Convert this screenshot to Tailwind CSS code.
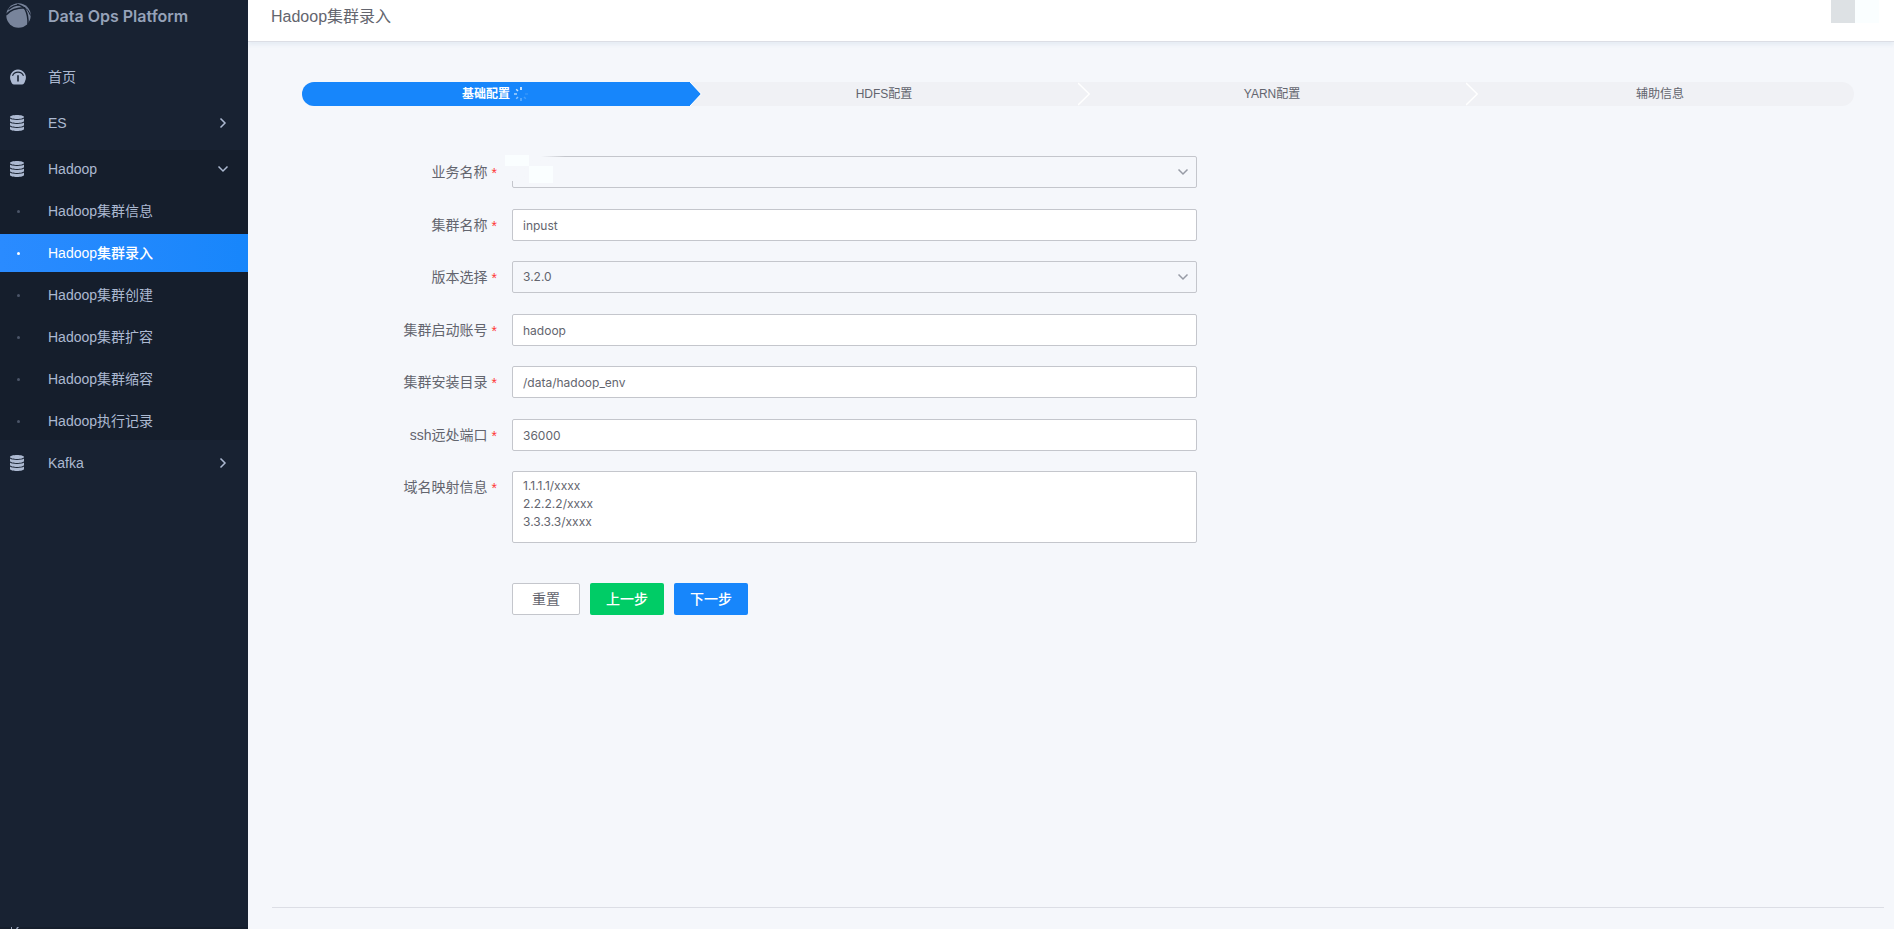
<!DOCTYPE html>
<html lang="zh-CN">
<head>
<meta charset="utf-8">
<title>Data Ops Platform</title>
<script src="https://cdn.jsdelivr.net/npm/@tailwindcss/browser@4"></script>
</head>
<body class="flex h-screen overflow-hidden bg-[#f5f7fb] font-['Liberation_Sans','Noto_Sans_CJK_SC',sans-serif] text-sm text-[#63656e]">
<svg class="hidden">
  <symbol id="db" viewBox="0 0 14 16"><path d="M7 0c3.900 0 7 .9 7 2s-3.100 2-7 2-7-.9-7-2 3.100-2 7-2zM0 3.600C1.200 4.600 4 5 7 5s5.800-.4 7-1.400V6c0 1.100-3.100 2-7 2S0 7.100 0 6zM0 7.600C1.200 8.600 4 9 7 9s5.800-.4 7-1.400V10c0 1.100-3.100 2-7 2s-7-.9-7-2zM0 11.600C1.200 12.600 4 13 7 13s5.800-.4 7-1.400V14c0 1.100-3.100 2-7 2s-7-.9-7-2z"/></symbol>
  <symbol id="right" viewBox="0 0 12 12"><path d="M3.500 1.500 8 6l-4.500 4.500" fill="none" stroke="currentColor" stroke-width="1.500"/></symbol>
  <symbol id="down" viewBox="0 0 12 12"><path d="M1.500 3.500 6 8l4.500-4.500" fill="none" stroke="currentColor" stroke-width="1.500"/></symbol>
</svg>

<aside class="flex w-[248px] shrink-0 flex-col overflow-hidden bg-[#182232] text-[#acb9d1]">
  <div class="flex h-[54px] shrink-0 items-start gap-[17px] pl-[6px] pt-[3px]">
    <svg class="size-[25px] text-[#78849b]" viewBox="0 0 25 25" aria-hidden="true">
      <circle cx="12.500" cy="12.500" r="12.200" fill="currentColor"/>
      <g fill="none" stroke="#182232"><path d="M0 12C3.500 7.500 9 5 19 4.800" stroke-width="1.500"/><path d="M11 1.500c4 .8 7 2.500 8.500 5.500 2 4 2.700 8.500 2.500 14" stroke-width="1.500"/><path d="M2.500 6.500C6 3.500 9 2 13 1.800" stroke-width="1.200"/><path d="M18.500 4.500c2.500 1.500 4.500 4 6 8" stroke-width="1"/></g>
    </svg>
    <span class="font-['Inter',sans-serif] text-base leading-[27px] font-semibold text-[#96a2b9]">Data Ops Platform</span>
  </div>
  <nav>
    <a href="#" class="my-1 flex h-[38px] items-center pl-[10px]">
      <svg class="size-4" viewBox="0 0 16 16" fill="currentColor"><path d="M8 .5a7.900 7.900 0 0 1 7.200 11.200C14.600 14 13.600 15.500 12 15.500H4c-1.600 0-2.600-1.500-3.200-3.800A7.900 7.900 0 0 1 8 .5z"/><path d="M2.500 6.800a6 6 0 0 1 11 0" fill="none" stroke="#182232" stroke-width="1.200"/><path d="M7.200 6.200h1.600v6.300H7.200z" fill="#182232"/></svg>
      <span class="ml-[22px]">首页</span>
    </a>
    <a href="#" class="mt-2 mb-1 flex h-[38px] items-center pl-[10px] pr-[19px]">
      <svg class="h-4 w-[14px]" fill="currentColor"><use href="#db"/></svg>
      <span class="ml-6 grow">ES</span>
      <svg class="size-3"><use href="#right"/></svg>
    </a>
    <div class="mt-2 flex flex-col gap-1 bg-[#151e2c]">
      <a href="#" class="flex h-[38px] items-center pl-[10px] pr-[19px]">
        <svg class="h-4 w-[14px]" fill="currentColor"><use href="#db"/></svg>
        <span class="ml-6 grow">Hadoop</span>
        <svg class="size-3"><use href="#down"/></svg>
      </a>
      <a href="#" class="flex h-[38px] items-center pl-[17px]"><i class="size-[3px] rounded-full bg-[#4b5568]"></i><span class="ml-7">Hadoop集群信息</span></a>
      <a href="#" class="flex h-[38px] items-center bg-linear-to-r from-[#2a8bff] to-[#1786fb] pl-[17px] font-medium text-white"><i class="size-[3px] rounded-full bg-white"></i><span class="ml-7">Hadoop集群录入</span></a>
      <a href="#" class="flex h-[38px] items-center pl-[17px]"><i class="size-[3px] rounded-full bg-[#4b5568]"></i><span class="ml-7">Hadoop集群创建</span></a>
      <a href="#" class="flex h-[38px] items-center pl-[17px]"><i class="size-[3px] rounded-full bg-[#4b5568]"></i><span class="ml-7">Hadoop集群扩容</span></a>
      <a href="#" class="flex h-[38px] items-center pl-[17px]"><i class="size-[3px] rounded-full bg-[#4b5568]"></i><span class="ml-7">Hadoop集群缩容</span></a>
      <a href="#" class="flex h-[38px] items-center pl-[17px]"><i class="size-[3px] rounded-full bg-[#4b5568]"></i><span class="ml-7">Hadoop执行记录</span></a>
    </div>
    <a href="#" class="my-1 flex h-[38px] items-center pl-[10px] pr-[19px]">
      <svg class="h-4 w-[14px]" fill="currentColor"><use href="#db"/></svg>
      <span class="ml-6 grow">Kafka</span>
      <svg class="size-3"><use href="#right"/></svg>
    </a>
  </nav>
  <div class="mt-auto h-[2px] bg-[#151e2c] pl-[10px]">
    <svg class="h-[2px] w-3" viewBox="0 0 12 2"><path d="M1 0h1v2H1zM7 0h2L7.500 2H6z" fill="#96a2b9"/></svg>
  </div>
</aside>

<div class="flex min-w-0 grow flex-col">
  <header class="z-10 flex h-[42px] shrink-0 items-start justify-between border-b border-[#dcdee5] bg-white pl-[23px] pr-[15px] shadow-[0_3px_4px_0_rgba(64,112,160,0.08)]">
    <h1 class="text-base leading-[34px]">Hadoop集群录入</h1>
    <div class="flex"><i class="h-[23px] w-6 bg-[#dde1e4]"></i><i class="h-[23px] w-6 bg-[#fafeff]"></i></div>
  </header>

  <main class="flex grow flex-col">
    <ol class="mt-10 mr-10 ml-[54px] grid h-6 grid-cols-4 overflow-hidden rounded-full bg-[#f0f1f5] text-xs">
      <li class="relative flex items-center justify-center gap-1 bg-[#1786fb] pr-[2px] font-bold text-white">
        基础配置
        <svg class="size-[14px]" viewBox="0 0 14 14" stroke="#fff" stroke-width="1.500"><path d="M7 0v3"/><path d="M2.200 2.200l1.800 1.800" opacity=".75"/><path d="M0 7h3" opacity=".65"/><path d="M2.200 11.800l1.800-1.800" opacity=".5"/><path d="M7 11v3" opacity=".35"/><path d="M10 10l1.800 1.800" opacity=".2"/><path d="M11 7h3" opacity=".12"/></svg>
        <svg class="absolute top-0 left-full z-10 h-6 w-3" viewBox="0 0 12 24"><path d="M-1 0H0l11 12L0 24h-1z" fill="#1786fb"/><path d="M0 0l11.300 12L0 24" fill="none" stroke="#fff"/></svg>
      </li>
      <li class="relative flex items-center justify-center">HDFS配置
        <svg class="absolute top-0 left-full h-6 w-3" viewBox="0 0 12 24"><path d="M0 1l11.300 11L0 23" fill="none" stroke="#fff" stroke-width="1.500"/></svg>
      </li>
      <li class="relative flex items-center justify-center">YARN配置
        <svg class="absolute top-0 left-full h-6 w-3" viewBox="0 0 12 24"><path d="M0 1l11.300 11L0 23" fill="none" stroke="#fff" stroke-width="1.500"/></svg>
      </li>
      <li class="flex items-center justify-center">辅助信息</li>
    </ol>

    <form class="mt-[50px] ml-[54px] w-[895px] max-w-full">
      <div class="flex flex-col gap-5 [&>*:nth-child(even)]:mt-px">
        <div class="flex">
          <label for="biz" class="flex h-8 w-[195px] shrink-0 justify-end gap-1 leading-8">业务名称<span class="pt-px text-[#ff3737]">*</span></label>
          <div class="relative ml-[15px] grow">
            <select id="biz" class="block h-8 w-full appearance-none rounded-[2px] border border-[#c4c6cc] bg-[#f5f7fb] px-[10px] font-['Inter',sans-serif] text-xs"><option></option></select>
            <svg class="absolute top-[10px] right-2 size-3 text-[#979ba5]"><use href="#down"/></svg>
            <div class="absolute -top-px -left-[7px] flex h-[26px] w-[60px] bg-linear-to-r from-[#f5f7fb] from-60% to-transparent"><i class="h-[11px] w-6 bg-[#fafeff]"></i><i class="mt-[11px] h-[17px] w-6 bg-[#fafeff]"></i></div>
          </div>
        </div>
        <div class="flex">
          <label for="name" class="flex h-8 w-[195px] shrink-0 justify-end gap-1 leading-8">集群名称<span class="pt-px text-[#ff3737]">*</span></label>
          <input id="name" value="inpust" class="ml-[15px] h-8 min-w-0 grow rounded-[2px] border border-[#c4c6cc] bg-white px-[10px] font-['Inter',sans-serif] text-xs">
        </div>
        <div class="flex">
          <label for="ver" class="flex h-8 w-[195px] shrink-0 justify-end gap-1 leading-8">版本选择<span class="pt-px text-[#ff3737]">*</span></label>
          <div class="relative ml-[15px] grow">
            <select id="ver" class="block h-8 w-full appearance-none rounded-[2px] border border-[#c4c6cc] bg-[#f5f7fb] px-[10px] font-['Inter',sans-serif] text-xs"><option>3.2.0</option></select>
            <svg class="absolute top-[10px] right-2 size-3 text-[#979ba5]"><use href="#down"/></svg>
          </div>
        </div>
        <div class="flex">
          <label for="acct" class="flex h-8 w-[195px] shrink-0 justify-end gap-1 leading-8">集群启动账号<span class="pt-px text-[#ff3737]">*</span></label>
          <input id="acct" value="hadoop" class="ml-[15px] h-8 min-w-0 grow rounded-[2px] border border-[#c4c6cc] bg-white px-[10px] font-['Inter',sans-serif] text-xs">
        </div>
        <div class="flex">
          <label for="dir" class="flex h-8 w-[195px] shrink-0 justify-end gap-1 leading-8">集群安装目录<span class="pt-px text-[#ff3737]">*</span></label>
          <input id="dir" value="/data/hadoop_env" class="ml-[15px] h-8 min-w-0 grow rounded-[2px] border border-[#c4c6cc] bg-white px-[10px] font-['Inter',sans-serif] text-xs">
        </div>
        <div class="flex">
          <label for="port" class="flex h-8 w-[195px] shrink-0 justify-end gap-1 leading-8">ssh远处端口<span class="pt-px text-[#ff3737]">*</span></label>
          <input id="port" value="36000" class="ml-[15px] h-8 min-w-0 grow rounded-[2px] border border-[#c4c6cc] bg-white px-[10px] font-['Inter',sans-serif] text-xs">
        </div>
        <div class="flex">
          <label for="hosts" class="flex h-8 w-[195px] shrink-0 justify-end gap-1 leading-8">域名映射信息<span class="pt-px text-[#ff3737]">*</span></label>
          <textarea id="hosts" class="ml-[15px] h-[72px] min-w-0 grow resize-none rounded-[2px] border border-[#c4c6cc] bg-white px-[10px] py-[5px] font-['Inter',sans-serif] text-xs leading-[18px]">1.1.1.1/xxxx
2.2.2.2/xxxx
3.3.3.3/xxxx</textarea>
        </div>
      </div>
      <div class="mt-10 ml-[210px] flex gap-[10px]">
        <button type="reset" class="h-8 w-[68px] rounded-[2px] border border-[#c4c6cc] bg-white">重置</button>
        <button type="button" class="h-8 w-[74px] rounded-[2px] bg-[#00cc66] font-medium text-white">上一步</button>
        <button type="button" class="h-8 w-[74px] rounded-[2px] bg-[#1786fb] font-medium text-white">下一步</button>
      </div>
    </form>
    <footer class="mt-auto mr-[10px] ml-6 h-[22px] border-t border-[#dcdee5]"></footer>
  </main>
</div>
</body>
</html>
